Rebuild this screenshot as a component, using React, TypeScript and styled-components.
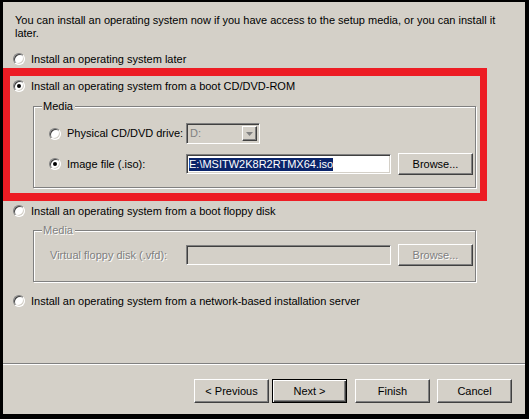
import React from "react";
import styled, { createGlobalStyle, css } from "styled-components";

const Global = createGlobalStyle`
  html, body { margin: 0; padding: 0; background: #000; }
  body { font-family: "Liberation Sans", Arial, sans-serif; font-size: 11px; }
  * { box-sizing: border-box; }
`;

const BG = "#D4D0C8";

const Frame = styled.div`
  position: relative;
  width: 529px;
  height: 419px;
  background: #000;
  padding: 2px 4px 5px 3px;
  display: flex;
`;

const Dialog = styled.div`
  flex: 1;
  display: flex;
  flex-direction: column;
  background: ${BG};
  color: #000;
  font-size: 11px;
  line-height: 13px;
`;

const Content = styled.div`
  display: flex;
  flex-direction: column;
  padding: 12px 0 0 10px;
`;

const Intro = styled.p`
  margin: 0 0 11px 2px;
  white-space: nowrap;
`;

const Row = styled.label<{ $mt?: number }>`
  display: flex;
  align-items: center;
  gap: 6px;
  height: 16px;
  margin-top: ${(p) => p.$mt ?? 0}px;
`;

const Radio = styled.span<{ $checked?: boolean }>`
  position: relative;
  flex: none;
  width: 12px;
  height: 12px;
  border-radius: 50%;
  background: #fff;
  border: 1px solid;
  border-color: #808080 #fff #fff #808080;
  box-shadow: inset 1px 1px 0 #404040, inset -1px -1px 0 ${BG};
  ${(p) =>
    p.$checked &&
    css`
      &::after {
        content: "";
        position: absolute;
        left: 3px;
        top: 3px;
        width: 4px;
        height: 4px;
        border-radius: 50%;
        background: #000;
      }
    `}
`;

const Group = styled.fieldset<{ $mt: number; $pt: number; $pb: number }>`
  margin: ${(p) => p.$mt}px 0 0 20px;
  width: 443px;
  padding: ${(p) => p.$pt}px 0 ${(p) => p.$pb}px 0;
  border: 1px solid #808080;
  box-shadow: 1px 1px 0 #fff, inset 1px 1px 0 #fff;
  min-width: 0;
`;

const Legend = styled.legend<{ $disabled?: boolean }>`
  margin-left: 8px;
  padding: 0 2px 0 1px;
  background: ${BG};
  line-height: 13px;
  color: ${(p) => (p.$disabled ? "#808080" : "#000")};
  text-shadow: ${(p) => (p.$disabled ? "1px 1px 0 #fff" : "none")};
`;

const Grid = styled.div<{ $rowGap?: number }>`
  display: grid;
  grid-template-columns: 137px auto auto;
  justify-content: start;
  row-gap: ${(p) => p.$rowGap ?? 0}px;
  align-items: center;
  padding-left: 15px;
`;

const Option = styled.label`
  display: flex;
  align-items: center;
  gap: 6px;
`;

const DisabledText = styled.span`
  color: #808080;
  text-shadow: 1px 1px 0 #fff;
  padding-left: 1px;
`;

const sunken = css`
  border: 1px solid;
  border-color: #808080 #fff #fff #808080;
  box-shadow: inset 1px 1px 0 #404040, inset -1px -1px 0 ${BG};
`;

const Combo = styled.div`
  ${sunken};
  width: 74px;
  height: 21px;
  background: ${BG};
  display: flex;
  align-items: center;
  padding: 2px 2px 2px 3px;
  color: #808080;
`;

const ComboText = styled.span`
  flex: 1;
`;

const ComboButton = styled.span`
  width: 15px;
  height: 15px;
  background: ${BG};
  border: 1px solid;
  border-color: #fff #404040 #404040 #fff;
  box-shadow: inset -1px -1px 0 #808080;
  display: flex;
  align-items: center;
  justify-content: center;
`;

const TextBox = styled.div<{ $disabled?: boolean }>`
  ${sunken};
  width: 205px;
  height: 20px;
  background: ${(p) => (p.$disabled ? BG : "#fff")};
  display: flex;
  align-items: center;
  padding: 0 2px;
`;

const Selection = styled.span`
  background: #0a246a;
  color: #fff;
  line-height: 13px;
  white-space: nowrap;
`;

const Button = styled.button<{ $default?: boolean; $disabled?: boolean }>`
  font: inherit;
  width: 75px;
  height: 23px;
  padding: 0;
  background: ${BG};
  color: ${(p) => (p.$disabled ? "#808080" : "#000")};
  text-shadow: ${(p) => (p.$disabled ? "1px 1px 0 #fff" : "none")};
  border: 1px solid;
  border-color: #fff #404040 #404040 #fff;
  box-shadow: inset -1px -1px 0 #808080, inset 1px 1px 0 ${BG};
  ${(p) =>
    p.$default &&
    css`
      border: 1px solid #000;
      box-shadow: inset 1px 1px 0 #fff, inset -1px -1px 0 #404040,
        inset -2px -2px 0 #808080;
    `}
`;

const BrowseButton = styled(Button)`
  margin-left: 7px;
  height: 22px;
`;

const Spacer = styled.div`
  flex: 1;
`;

const Separator = styled.div`
  height: 2px;
  border-top: 1px solid #808080;
  border-bottom: 1px solid #fff;
`;

const Footer = styled.div`
  display: flex;
  justify-content: flex-end;
  padding: 14px 13px 11px 0;
`;

const FooterButton = styled(Button)<{ $ml?: number }>`
  height: 24px;
  margin-left: ${(p) => p.$ml ?? 0}px;
`;

const RedBox = styled.div`
  position: absolute;
  left: 3px;
  top: 68px;
  width: 484px;
  height: 133px;
  border-style: solid;
  border-color: #ed1c24;
  border-width: 8px 7px;
  pointer-events: none;
`;

const Arrow = ({ color }: { color: string }) => (
  <svg width="7" height="4" viewBox="0 0 7 4">
    <path d="M0 0h7L3.5 4z" fill={color} />
  </svg>
);

export default function App() {
  return (
    <>
      <Global />
      <Frame>
        <Dialog>
          <Content>
            <Intro>
              You can install an operating system now if you have access to the setup media, or you can install it
              <br />
              later.
            </Intro>
            <Row>
              <Radio />
              Install an operating system later
            </Row>
            <Row $mt={11}>
              <Radio $checked />
              Install an operating system from a boot CD/DVD-ROM
            </Row>
            <Group $mt={6} $pt={10} $pb={12}>
              <Legend>Media</Legend>
              <Grid $rowGap={9}>
                <Option>
                  <Radio />
                  Physical CD/DVD drive:
                </Option>
                <Combo>
                  <ComboText>D:</ComboText>
                  <ComboButton>
                    <Arrow color="#808080" />
                  </ComboButton>
                </Combo>
                <span />
                <Option>
                  <Radio $checked />
                  Image file (.iso):
                </Option>
                <TextBox>
                  <Selection>E:\MSITW2K8R2RTMX64.iso</Selection>
                </TextBox>
                <BrowseButton>Browse...</BrowseButton>
              </Grid>
            </Group>
            <Row $mt={15}>
              <Radio />
              Install an operating system from a boot floppy disk
            </Row>
            <Group $mt={5} $pt={7} $pb={15}>
              <Legend $disabled>Media</Legend>
              <Grid>
                <DisabledText>Virtual floppy disk (.vfd):</DisabledText>
                <TextBox $disabled />
                <BrowseButton $disabled>Browse...</BrowseButton>
              </Grid>
            </Group>
            <Row $mt={11}>
              <Radio />
              Install an operating system from a network-based installation server
            </Row>
          </Content>
          <Spacer />
          <Separator />
          <Footer>
            <FooterButton>&lt; Previous</FooterButton>
            <FooterButton $default $ml={3}>
              Next &gt;
            </FooterButton>
            <FooterButton $ml={8}>Finish</FooterButton>
            <FooterButton $ml={7}>Cancel</FooterButton>
          </Footer>
        </Dialog>
        <RedBox />
      </Frame>
    </>
  );
}
